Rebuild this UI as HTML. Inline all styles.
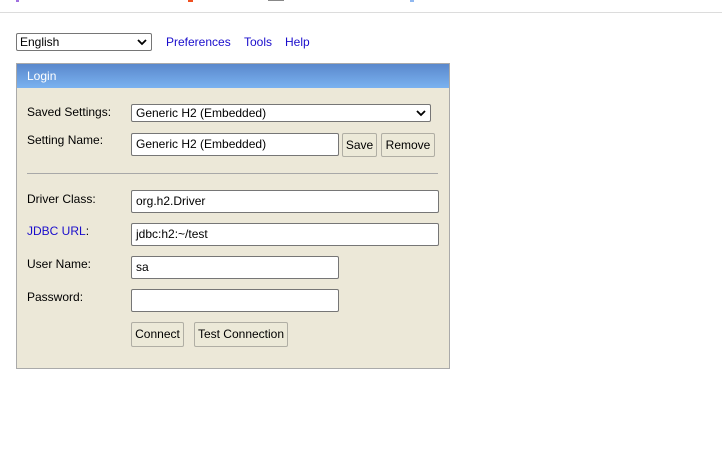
<!DOCTYPE html>
<html><head><style>
body{margin:0;width:722px;height:450px;background:#fff;font-family:"Liberation Sans",Arial,sans-serif;font-size:12px;position:relative;overflow:hidden}
.a{position:absolute}
.inp{position:absolute;box-sizing:border-box;background:#fff;border:1px solid #767676;border-radius:2px;padding:0 4px;font-size:12px;color:#000;line-height:20px;white-space:nowrap}
.btn{position:absolute;box-sizing:border-box;background:#ece9d8;border:1px solid #b0aea4;border-radius:2px;font-size:12px;text-align:center;line-height:22px;color:#000}
.lbl{position:absolute;left:27px;color:#000}
.chev{position:absolute;right:4px;top:4px}
</style></head><body>
<div class="a" style="left:0;top:12px;width:722px;height:1px;background:#dcdcdc"></div>
<div class="a" style="left:16px;top:0;width:3px;height:2px;background:#a070e0"></div>
<div class="a" style="left:188px;top:0;width:5px;height:2px;background:#f05020"></div>
<div class="a" style="left:268px;top:0;width:16px;height:1px;background:#888"></div>
<div class="a" style="left:410px;top:0;width:4px;height:2px;background:#90b8f0"></div>

<div class="inp" style="left:16px;top:33px;width:136px;height:18px;line-height:16px;padding-left:3px">English<svg class="chev" style="top:4px" width="10" height="8" viewBox="0 0 10 8"><path d="M1 2 L5 6 L9 2" stroke="#000" stroke-width="1.8" fill="none"/></svg></div>
<div class="a" style="left:166px;top:35px;color:#1a0dcc">Preferences</div>
<div class="a" style="left:244px;top:35px;color:#1a0dcc">Tools</div>
<div class="a" style="left:285px;top:35px;color:#1a0dcc">Help</div>

<div class="a" style="left:16px;top:63px;width:432px;height:304px;background:#ece8d8;border:1px solid #aaa"></div>
<div class="a" style="left:17px;top:64px;width:432px;height:24px;background:linear-gradient(#5a88cc,#7ab2f0);color:#fff;line-height:24px;padding-left:10px;box-sizing:border-box">Login</div>

<div class="lbl" style="top:105px">Saved Settings:</div>
<div class="inp" style="left:131px;top:104px;width:300px;height:18px;line-height:16px;padding-left:4px">Generic H2 (Embedded)<svg class="chev" width="10" height="8" viewBox="0 0 10 8"><path d="M1 2 L5 6 L9 2" stroke="#000" stroke-width="1.8" fill="none"/></svg></div>

<div class="lbl" style="top:133px">Setting Name:</div>
<div class="inp" style="left:131px;top:133px;width:208px;height:23px">Generic H2 (Embedded)</div>
<div class="btn" style="left:342px;top:133px;width:35px;height:24px">Save</div>
<div class="btn" style="left:381px;top:133px;width:54px;height:24px">Remove</div>

<div class="a" style="left:27px;top:173px;width:411px;height:1px;background:#a8a8a8"></div>

<div class="lbl" style="top:192px">Driver Class:</div>
<div class="inp" style="left:131px;top:190px;width:308px;height:23px">org.h2.Driver</div>
<div class="lbl" style="top:224px;color:#1a0dcc">JDBC URL<span style="color:#000">:</span></div>
<div class="inp" style="left:131px;top:223px;width:308px;height:23px">jdbc:h2:~/test</div>
<div class="lbl" style="top:257px">User Name:</div>
<div class="inp" style="left:131px;top:256px;width:208px;height:23px">sa</div>
<div class="lbl" style="top:290px">Password:</div>
<div class="inp" style="left:131px;top:289px;width:208px;height:23px"></div>
<div class="btn" style="left:131px;top:322px;width:53px;height:25px">Connect</div>
<div class="btn" style="left:194px;top:322px;width:94px;height:25px">Test Connection</div>
</body></html>
